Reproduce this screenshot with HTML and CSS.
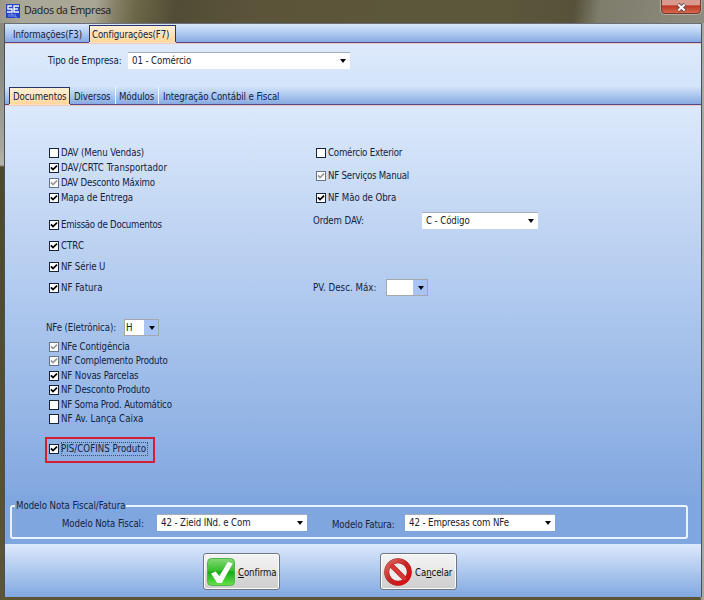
FILE: index.html
```html
<!DOCTYPE html>
<html lang="pt-BR">
<head>
<meta charset="utf-8">
<title>Dados da Empresa</title>
<link rel="stylesheet" href="styles.css">
</head>
<body>
<svg class="defs" width="0" height="0" aria-hidden="true"><symbol id="tick" viewBox="0 0 10 10"><path d="M1.2 4.2 3.8 7 8.8 2" fill="none" stroke="currentColor" stroke-width="2.2"/></symbol></svg>
<div class="window">
  <header class="titlebar">
    <svg class="logo" viewBox="0 0 14 14"><rect width="14" height="14" fill="#2544c8"/><path d="M6 2H2v3h4v3H1M13 2H8v6h5M8 5h4" fill="none" stroke="#f4f7ff" stroke-width="1.4"/><path d="M3 10v3M5 13v-3h2v3M9 10v3h2" fill="none" stroke="#87a0ee" stroke-width=".9"/></svg>
    <h1>Dados da Empresa</h1>
    <button class="close" aria-label="Fechar"><svg width="11" height="9" viewBox="0 0 11 9"><path d="M2 1.2 9 7.8M9 1.2 2 7.8" stroke="#5b4340" stroke-width="3.8"/><path d="M2.3 1.5 8.7 7.5M8.7 1.5 2.3 7.5" stroke="#fff" stroke-width="2.2"/></svg></button>
  </header>
  <main class="client">
    <nav class="tabs main-tabs"><span class="tab first">Informações(F3)</span><span class="tab active">Configurações(F7)</span></nav>
    <section class="company"><label>Tipo de Empresa:</label><div class="select company-select"><span>01 - Comércio</span><i></i></div></section>
    <nav class="tabs sub-tabs"><span class="tab active">Documentos</span><span class="tab div">Diversos</span><span class="tab mod">Módulos</span><span class="tab int">Integração Contábil e Fiscal</span></nav>
    <section class="page">
      <div class="left">
        <div class="check"><b></b><span>DAV (Menu Vendas)</span></div>
        <div class="check g1"><b><svg><use href="#tick"/></svg></b><span class="wide">DAV/CRTC Transportador</span></div>
        <div class="check g1"><b class="grey"><svg><use href="#tick"/></svg></b><span class="narrow">DAV Desconto Máximo</span></div>
        <div class="check g1"><b><svg><use href="#tick"/></svg></b><span>Mapa de Entrega</span></div>
        <div class="check g13"><b><svg><use href="#tick"/></svg></b><span class="narrow2">Emissão de Documentos</span></div>
        <div class="check g7"><b><svg><use href="#tick"/></svg></b><span class="wide">CTRC</span></div>
        <div class="check g7"><b><svg><use href="#tick"/></svg></b><span>NF Série U</span></div>
        <div class="check g7"><b><svg><use href="#tick"/></svg></b><span class="wide">NF Fatura</span></div>
        <div class="nfe"><label>NFe (Eletrônica):</label><div class="combo"><span>H</span><em><i></i></em></div></div>
        <div class="check g4"><b class="grey"><svg><use href="#tick"/></svg></b><span>NFe Contigência</span></div>
        <div class="check"><b class="grey"><svg><use href="#tick"/></svg></b><span class="narrow">NF Complemento Produto</span></div>
        <div class="check g1"><b><svg><use href="#tick"/></svg></b><span>NF Novas Parcelas</span></div>
        <div class="check"><b><svg><use href="#tick"/></svg></b><span>NF Desconto Produto</span></div>
        <div class="check g1"><b></b><span class="narrow">NF Soma Prod. Automático</span></div>
        <div class="check"><b></b><span class="wide">NF Av. Lança Caixa</span></div>
        <div class="highlight"><div class="check"><b><svg><use href="#tick"/></svg></b><span class="focus wide">PIS/COFINS Produto</span></div></div>
      </div>
      <div class="right">
        <div class="check"><b></b><span class="narrow">Comércio Exterior</span></div>
        <div class="check g9"><b class="grey"><svg><use href="#tick"/></svg></b><span class="narrow">NF Serviços Manual</span></div>
        <div class="check g8"><b><svg><use href="#tick"/></svg></b><span>NF Mão de Obra</span></div>
        <div class="order"><label>Ordem DAV:</label><div class="select"><span>C - Código</span><i></i></div></div>
        <div class="pv"><label>PV. Desc. Máx:</label><div class="combo"><span></span><em><i></i></em></div></div>
      </div>
    </section>
    <section class="models">
      <fieldset><legend>Modelo Nota Fiscal/Fatura</legend>
        <div class="model-row"><label class="l1">Modelo Nota Fiscal:</label><div class="select"><span>42 - Zieid INd. e Com</span><i></i></div><label class="l2">Modelo Fatura:</label><div class="select"><span>42 - Empresas com NFe</span><i></i></div></div>
      </fieldset>
    </section>
    <footer>
      <button class="action"><svg width="28" height="28" viewBox="0 0 28 28"><defs><linearGradient id="green" x2="0" y2="1"><stop stop-color="#86da78"/><stop offset=".45" stop-color="#36bd2d"/><stop offset=".5" stop-color="#17aa13"/><stop offset="1" stop-color="#65e34d"/></linearGradient></defs><rect x=".5" y=".5" width="27" height="27" rx="4" fill="url(#green)" stroke="#55b04b"/><path d="M4 15.5 8.7 13.5l3.6 4.7L21 3.8l4.7 1.6L14.8 25h-4.5z" fill="#fff"/></svg><span><u>C</u>onfirma</span></button>
      <button class="action cancel"><svg width="28" height="28" viewBox="0 0 28 28"><defs><linearGradient id="red" x2="1" y2="1"><stop stop-color="#d96862"/><stop offset=".5" stop-color="#c62524"/><stop offset="1" stop-color="#dd0808"/></linearGradient></defs><circle cx="14" cy="14" r="11.3" fill="#eee" stroke="#aa2424" stroke-width="5"/><path d="m6.5 6.5 15 15" stroke="#b92020" stroke-width="4.8"/><circle cx="14" cy="14" r="11.3" fill="none" stroke="url(#red)" stroke-width="4.1"/><path d="m6.5 6.5 15 15" stroke="#d33835" stroke-width="3.8"/></svg><span>Ca<u>n</u>celar</span></button>
    </footer>
  </main>
</div>
</body>
</html>
```
FILE: styles.css
```css
* { box-sizing: border-box; }
body { margin: 0; font: 9.6px/14px "DejaVu Sans Condensed", "DejaVu Sans", sans-serif; font-stretch: condensed; color: #14223d; letter-spacing: -.1px; }
.defs { position: absolute; }
.window { width: 704px; height: 600px; padding: 0 2px 3px 4px; overflow: hidden; background: linear-gradient(90deg, transparent 700px, #aaa99d 702px), linear-gradient(#8c897a 0 24px, #85877d 60px, #aaa99f 150px, #b5b5aa 165px, #4c4829 167px, #5c5536 100%); }
.titlebar { display: flex; align-items: flex-start; height: 23px; margin: 0 -2px 0 -4px; padding: 3px 2px 0 6px; background: linear-gradient(98deg, #9b988a 0, #aaa898 25px, #a9a695 95px, #858067 115px, #6d6849 135px, #514c35 175px, #5b543a 250px, #5c573b 500px, #565139 570px, #7e7d6c 595px, #8d8c7e); }
.logo { width: 14px; height: 14px; margin-top: 1px; }
h1 { margin: 0 auto 0 4px; font: 10.6px/15px "Open Sans", "Noto Sans", sans-serif; letter-spacing: -.38px; color: #171a1d; }
.close { width: 40px; height: 16px; margin: -5px 1px 0 0; padding: 2px 0 0; border: 1px solid #6d3b32; border-radius: 0 0 4px 4px; background: linear-gradient(#d89a8c 0 40%, #bd3725 50%, #d7694b); box-shadow: 0 0 0 1px #b6aaa0; line-height: 0; }
.client { height: 574px; border: 1px solid #48505c; border-top-color: #6a7078; background: #84a9e1; }
.tabs { display: flex; align-items: flex-end; height: 20px; background: linear-gradient(#d9e8fb, #b4cef2 45%, #87aae2); border-bottom: 1px solid #54478b; box-shadow: 0 1px #f0c8c0; position: relative; }
.main-tabs { height: 19px; }
.tab { height: 17px; padding-top: 3px; white-space: nowrap; }
.first { width: 84px; padding-left: 8px; }
.active { height: 17px; border: 1px solid #29346e; border-bottom: 0; background: linear-gradient(#fff0d6, #ffd79c); padding: 2px 0 0 3px; box-shadow: 0 1px #ffe2bb; }
.main-tabs .active { width: 87px; padding-left: 2px; }
.sub-tabs { padding-left: 4px; }
.sub-tabs .active { width: 61px; }
.div { width: 45px; padding-left: 4px; }
.mod { width: 43px; border-left: 1px solid #eff5ff; padding-left: 3px; }
.int { border-left: 1px solid #eff5ff; padding-left: 4px; }
.company { display: flex; align-items: center; height: 42px; padding: 0 0 7px 43px; background: linear-gradient(#deeafb, #d3e4fa); }
.company label { width: 80px; }
.select { display: flex; align-items: center; height: 17px; width: 116px; background: #fff; border-top: 1px solid #a4adb8; padding: 0 4px; color: #18202c; white-space: nowrap; }
.select i, .combo i { margin-left: auto; border: 3.5px solid transparent; border-top: 4px solid #05080e; border-bottom: 0; }
.company-select { width: 222px; }
.page { display: flex; height: 391px; padding-top: 41px; background: linear-gradient(#dce9fb, #82a8e0); }
.left { width: 267px; padding-left: 44px; }
.right { width: 300px; padding-left: 44px; }
.check { display: flex; align-items: center; height: 14px; white-space: nowrap; }
.check b { width: 10px; height: 10px; margin-right: 2px; border: 1px solid #172338; background: #fff; line-height: 0; color: #000; }
.check svg { width: 8px; height: 8px; overflow: visible; }
.check .grey { border-color: #667287; color: #999; }
.wide { letter-spacing: .03px; }
.narrow { letter-spacing: -.2px; }
.narrow2 { letter-spacing: -.28px; }
.g1 { margin-top: 1px; } .g4 { margin-top: 4px; } .g7 { margin-top: 7px; } .g8 { margin-top: 8px; } .g9 { margin-top: 9px; } .g13 { margin-top: 13px; }
.nfe { display: flex; align-items: center; height: 17px; margin: 24px 0 0 -3px; }
.nfe label { width: 78px; }
.combo { display: flex; width: 35px; height: 17px; background: #fff; border: 1px solid #a4a7ac; }
.combo span { flex: 1; padding-left: 1px; line-height: 16px; }
.combo em { width: 14px; display: flex; align-items: center; padding-right: 3px; background: #a7c4f3; }
.highlight { width: 110px; height: 26px; margin: 11px 0 0 -4px; padding: 3px 0 0 2px; border: 2px solid #d31f32; }
.focus { outline: 1px dotted #395171; outline-offset: -1px; padding-right: 2px; }
.order { display: flex; align-items: center; height: 17px; margin: 7px 0 0 -3px; }
.order label { width: 109px; }
.pv { display: flex; align-items: center; height: 17px; margin: 50px 0 0 -3px; }
.pv label { width: 73px; letter-spacing: .05px; }
.pv .combo { width: 42px; }
.models { height: 48px; padding: 3px 13px 0 5px; background: #80a6e0; }
fieldset { height: 40px; min-width: 0; margin: 0; padding: 0 0 0 50px; border: 2px solid #eaf3ff; border-radius: 3px; }
legend { margin-left: -47px; padding: 0 1px; height: 14px; letter-spacing: -.05px; }
.model-row { display: flex; align-items: center; }
.model-row .select { width: 150px; }
.l1 { width: 95px; padding-top: 2px; }
.l2 { width: 73px; margin-left: 25px; padding-top: 5px; white-space: nowrap; }
footer { display: flex; align-items: flex-start; height: 53px; padding: 9px 0 0 198px; background: linear-gradient(#dce9fc, #82a8e1); }
.action { display: flex; align-items: center; width: 77px; height: 37px; padding: 0 0 0 3px; border: 1px solid #707681; border-radius: 3px; background: linear-gradient(#f3f3f3, #e9e9e9 48%, #dbdbdb 50%, #cfcfcf); box-shadow: inset 0 0 0 1px #fbfbfb; font: inherit; letter-spacing: inherit; color: #111; }
.action span { margin-left: 3px; padding-top: 3px; }
.cancel { margin-left: 100px; }
```
